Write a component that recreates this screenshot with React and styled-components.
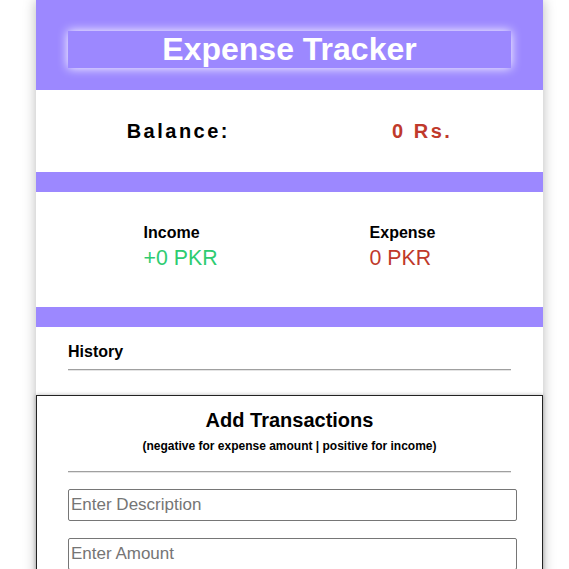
import React from "react";
import styled, { createGlobalStyle } from "styled-components";

const purple = "#9c88ff";

const GlobalStyle = createGlobalStyle`
  html, body { margin: 0; padding: 0; background: #fff; }
  body { padding-left: 10px; font-family: "Liberation Sans", Arial, sans-serif; color: #000; }
  * { box-sizing: border-box; }
`;

const Wrapper = styled.div`
  width: 507px;
  margin: 0 auto;
  background: #fff;
  box-shadow: 0 0 12px rgba(0, 0, 0, 0.28);
`;

const Header = styled.header`
  background: ${purple};
  padding: 31px 32px 22px;
`;

const Title = styled.h1`
  margin: 0;
  font-size: 32px;
  line-height: 37px;
  font-weight: 700;
  color: #fff;
  text-align: center;
  background: ${purple};
  box-shadow: 0 0 10px #fff;
`;

const Band = styled.div`
  height: 20px;
  background: ${purple};
`;

const BalanceRow = styled.section`
  height: 82px;
  display: flex;
  align-items: center;
  justify-content: center;
  gap: 162px;
`;

const BalanceText = styled.span`
  font-size: 20px;
  font-weight: 700;
  letter-spacing: 2.5px;
  color: ${(p) => p.$color || "#000"};
`;

const StatsRow = styled.section`
  height: 115px;
  padding-top: 32px;
  display: flex;
  justify-content: center;
  align-items: flex-start;
  gap: 152px;
`;

const Stat = styled.div`
  display: flex;
  flex-direction: column;
  gap: 4px;
`;

const StatLabel = styled.span`
  font-size: 16px;
  font-weight: 700;
`;

const StatValue = styled.span`
  font-size: 21.3px;
  color: ${(p) => p.$color};
`;

const History = styled.section`
  padding: 16px 32px 0;
  height: 67px;
`;

const SectionTitle = styled.h3`
  margin: 0;
  font-size: 16px;
  font-weight: 700;
`;

const Rule = styled.hr`
  margin: ${(p) => p.$margin || "0"};
  border: 0;
  border-top: 1px solid #a0a0a0;
  border-bottom: 1px solid #e4e4e4;
  height: 0;
`;

const AddBox = styled.section`
  margin-top: 1px;
  border: 1px solid #222;
  box-shadow: 0 0 4px rgba(0, 0, 0, 0.3);
  padding: 13px 31px 20px;
`;

const AddTitle = styled.h2`
  margin: 0;
  font-size: 20px;
  font-weight: 700;
  text-align: center;
`;

const Hint = styled.p`
  margin: 7px 0 0;
  font-size: 12px;
  font-weight: 700;
  text-align: center;
`;

const Form = styled.form`
  display: flex;
  flex-direction: column;
  gap: 17px;
`;

const Input = styled.input`
  box-sizing: content-box;
  width: 100%;
  height: 26px;
  padding: 2px 2px;
  border: 1px solid #767676;
  border-radius: 2px;
  font-family: "Liberation Sans", Arial, sans-serif;
  font-size: 17px;
  color: #000;
  &::placeholder { color: #757575; }
`;

export default function App() {
  return (
    <>
      <GlobalStyle />
      <Wrapper>
        <Header>
          <Title>Expense Tracker</Title>
        </Header>
        <BalanceRow>
          <BalanceText>Balance:</BalanceText>
          <BalanceText $color="#c0392b">0 Rs.</BalanceText>
        </BalanceRow>
        <Band />
        <StatsRow>
          <Stat>
            <StatLabel>Income</StatLabel>
            <StatValue $color="#2ecc71">+0 PKR</StatValue>
          </Stat>
          <Stat>
            <StatLabel>Expense</StatLabel>
            <StatValue $color="#c0392b">0 PKR</StatValue>
          </Stat>
        </StatsRow>
        <Band />
        <History>
          <SectionTitle>History</SectionTitle>
          <Rule $margin="8px 0 0" />
        </History>
        <AddBox>
          <AddTitle>Add Transactions</AddTitle>
          <Hint>(negative for expense amount | positive for income)</Hint>
          <Rule $margin="18px 0 16px" />
          <Form onSubmit={(e) => e.preventDefault()}>
            <Input type="text" placeholder="Enter Description" />
            <Input type="number" placeholder="Enter Amount" />
          </Form>
        </AddBox>
      </Wrapper>
    </>
  );
}
